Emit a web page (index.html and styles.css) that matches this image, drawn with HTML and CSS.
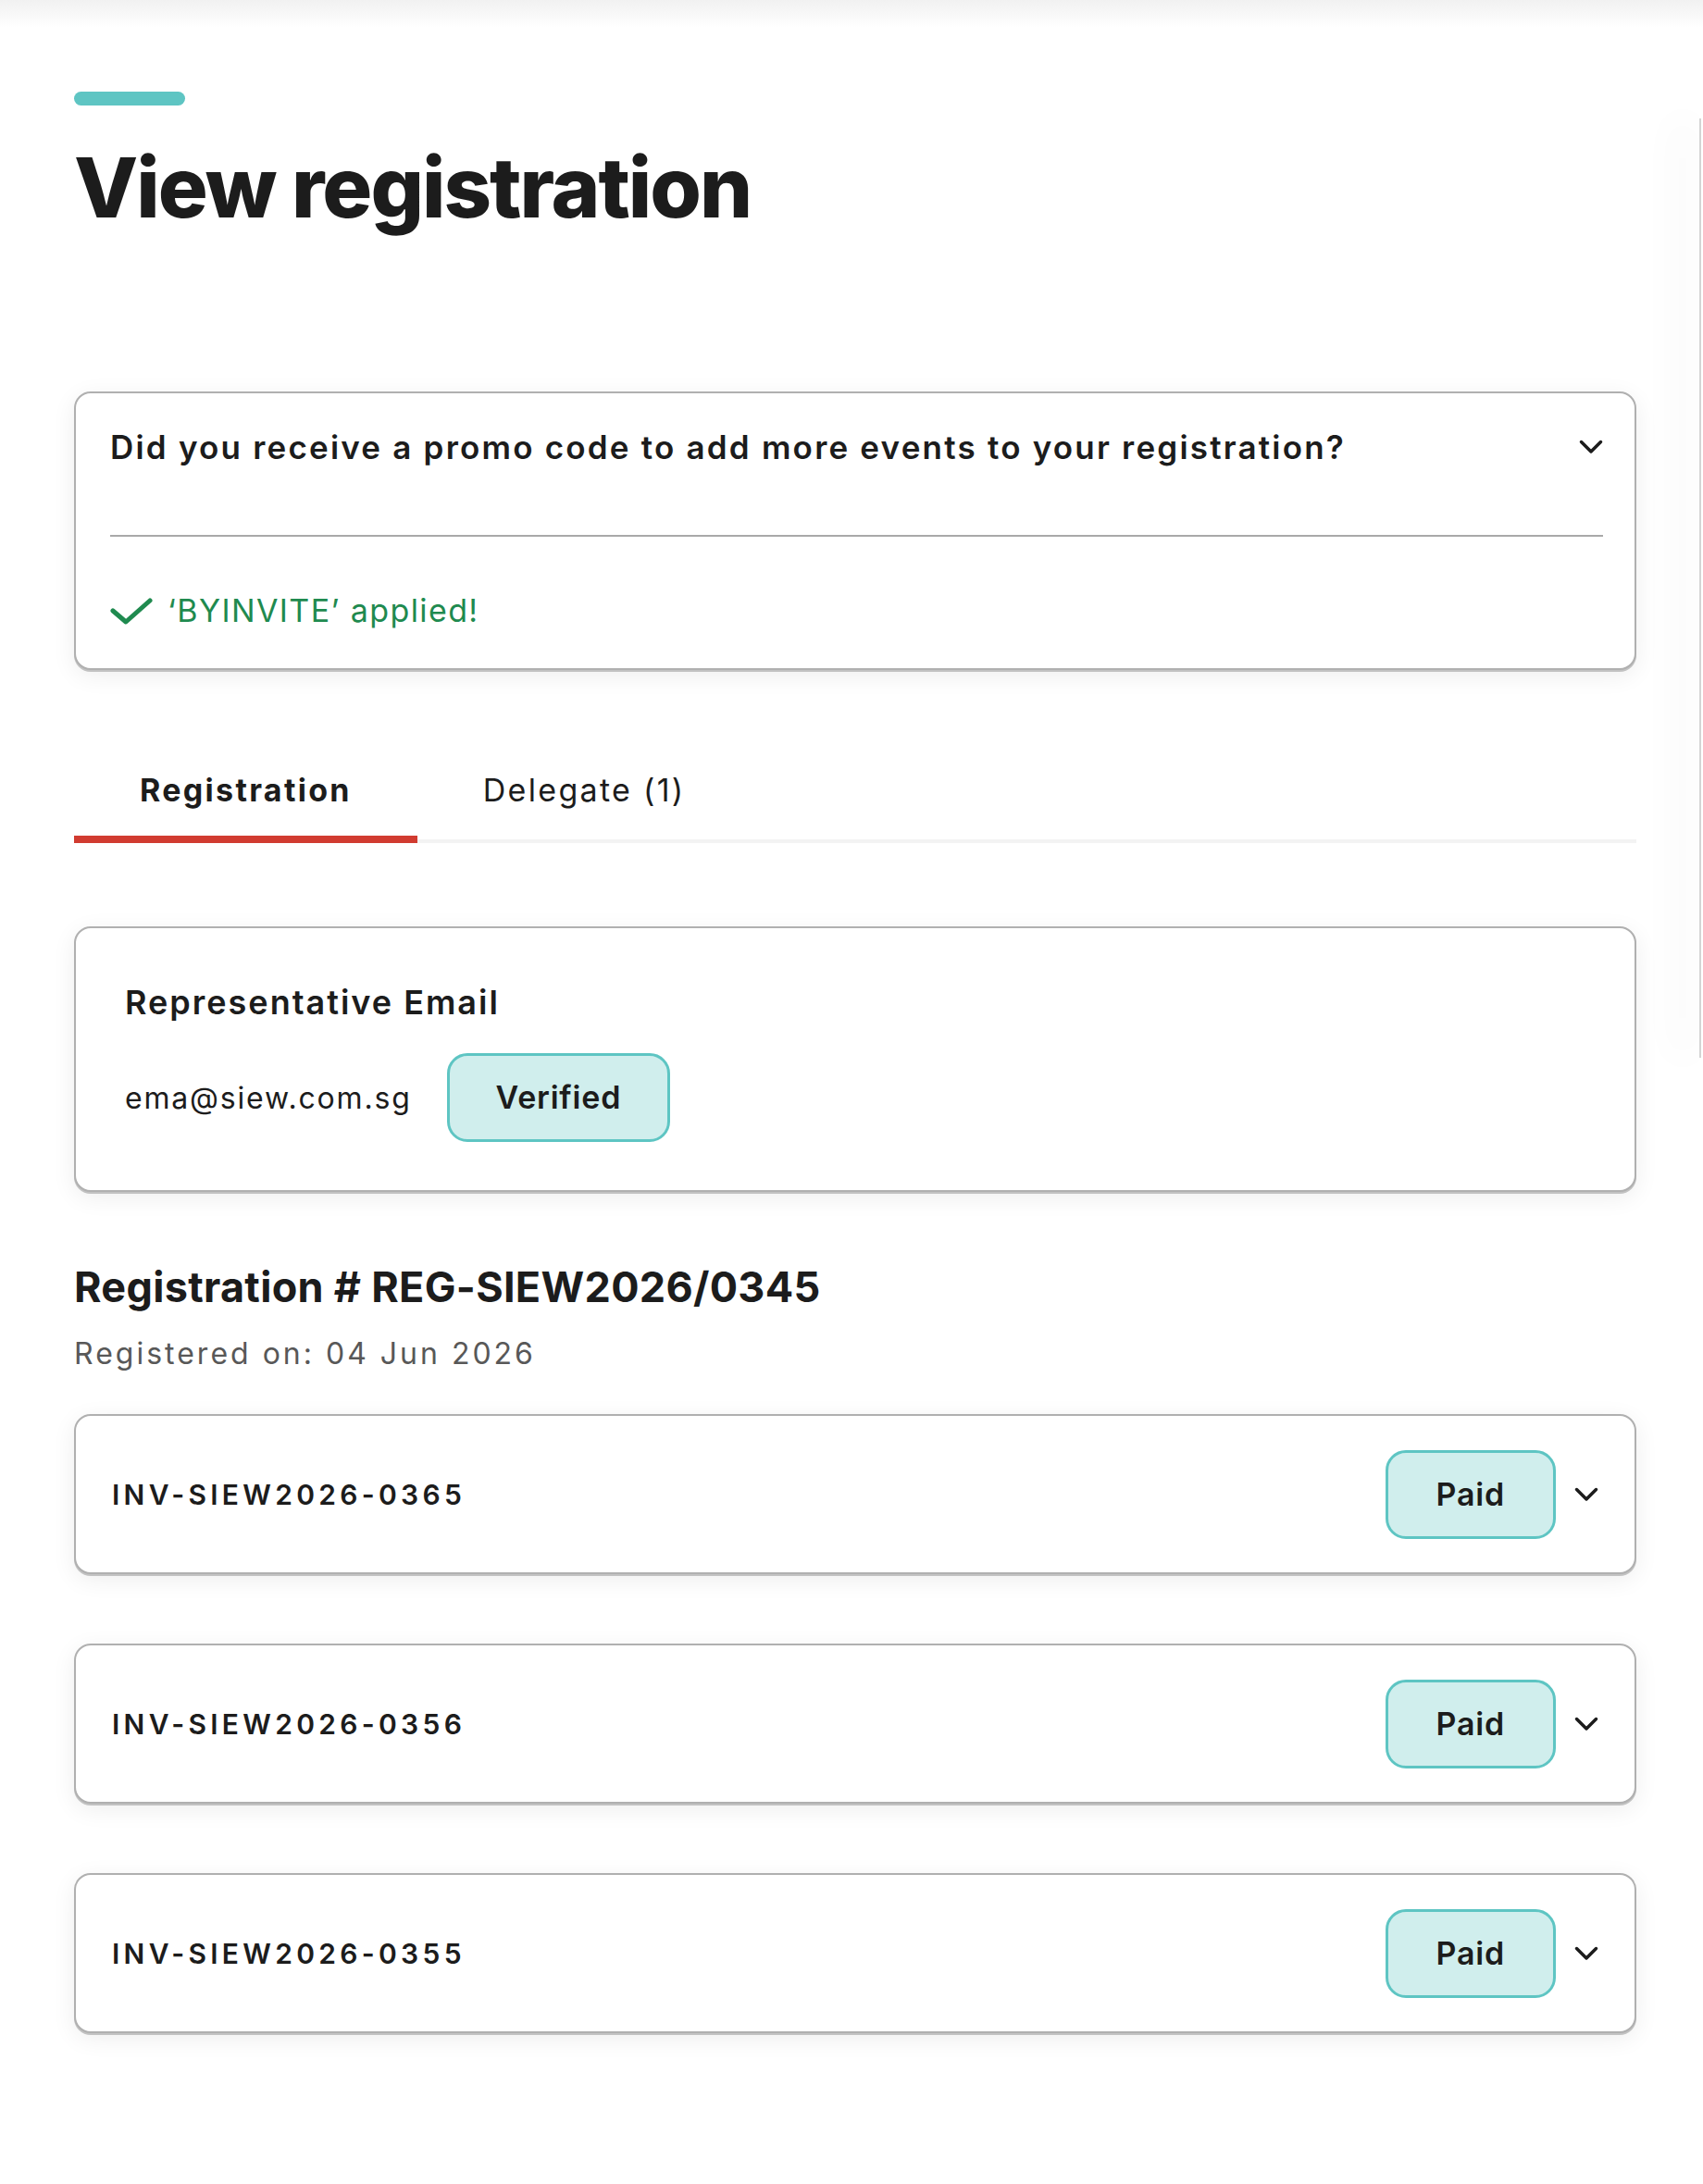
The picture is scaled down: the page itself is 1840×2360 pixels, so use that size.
FILE: index.html
```html
<!DOCTYPE html>
<html lang="en">
<head>
    <meta charset="UTF-8">
    <meta name="viewport" content="width=device-width, initial-scale=1.0">
    <title>View registration</title>
    <link rel="stylesheet" href="styles.css">
</head>
<body>
    <div class="side-panel"></div>
    <main class="page">
        <div class="accent-bar"></div>
        <h1 class="page-title">View registration</h1>

        <section class="card promo">
            <div class="promo-head">
                <span class="promo-question">Did you receive a promo code to add more events to your registration?</span>
                <svg class="chevron" viewBox="0 0 26 16" width="26" height="16"><path d="M2.5 2.5 L13 13 L23.5 2.5" /></svg>
            </div>
            <div class="promo-body">
                <svg class="check" viewBox="0 0 46 30" width="46" height="30"><path d="M3 15 L17 27 L43 4" /></svg>
                <span class="promo-applied">‘BYINVITE’ applied!</span>
            </div>
        </section>

        <nav class="tabs">
            <button class="tab active">Registration</button>
            <button class="tab">Delegate (1)</button>
        </nav>

        <section class="card rep-card">
            <h3 class="rep-label">Representative Email</h3>
            <div class="rep-row">
                <span class="rep-email">ema@siew.com.sg</span>
                <span class="badge">Verified</span>
            </div>
        </section>

        <h2 class="reg-number">Registration # REG-SIEW2026/0345</h2>
        <p class="reg-date">Registered on: 04 Jun 2026</p>

        <div class="invoice-list">
            <div class="card invoice">
                <span class="invoice-no">INV-SIEW2026-0365</span>
                <span class="badge">Paid</span>
                <svg class="chevron" viewBox="0 0 26 16" width="26" height="16"><path d="M2.5 2.5 L13 13 L23.5 2.5" /></svg>
            </div>
            <div class="card invoice">
                <span class="invoice-no">INV-SIEW2026-0356</span>
                <span class="badge">Paid</span>
                <svg class="chevron" viewBox="0 0 26 16" width="26" height="16"><path d="M2.5 2.5 L13 13 L23.5 2.5" /></svg>
            </div>
            <div class="card invoice">
                <span class="invoice-no">INV-SIEW2026-0355</span>
                <span class="badge">Paid</span>
                <svg class="chevron" viewBox="0 0 26 16" width="26" height="16"><path d="M2.5 2.5 L13 13 L23.5 2.5" /></svg>
            </div>
        </div>
    </main>
</body>
</html>
```

FILE: styles.css
```css
body {
    margin: 0;
    font-family: Inter, "Noto Sans", sans-serif;
    color: #1c1c1c;
    background: #fff;
    background-image: linear-gradient(#f1f1f1, #fff 30px);
    background-repeat: no-repeat;
    min-height: 2360px;
}

/* edge of the next panel peeking in on the right */
.side-panel {
    position: absolute;
    top: 128px;
    left: 1836px;
    width: 10px;
    height: 1015px;
    border-left: 2px solid #d4d4d4;
    box-shadow: -24px 0 40px rgba(0, 0, 0, 0.05);
}

.page {
    width: 1688px;
    padding: 99px 0 0 80px;
}

.accent-bar {
    width: 120px;
    height: 15px;
    border-radius: 8px;
    background-color: #5ec5c3;
}

.page-title {
    margin: 44px 0 0;
    font-size: 90px;
    line-height: 90px;
    font-weight: 800;
    letter-spacing: -2px;
}

.card {
    background: #fff;
    border: 2px solid #b0b0b0;
    border-radius: 18px;
    box-shadow: 0 2px 0 #c2c2c2, 0 6px 26px rgba(0, 0, 0, 0.07);
}

.promo {
    margin-top: 175px;
    padding: 36px 34px 40px 37px;
}

.promo-head {
    display: flex;
    align-items: center;
    justify-content: space-between;
    padding-bottom: 73px;
    border-bottom: 2px solid #a9a9a9;
}

.promo-question {
    font-size: 35px;
    line-height: 44px;
    font-weight: 600;
    letter-spacing: 2.2px;
}

.chevron {
    flex-shrink: 0;
    fill: none;
    stroke: #1c1c1c;
    stroke-width: 3.5;
    stroke-linecap: round;
    stroke-linejoin: round;
}

.promo-body {
    display: flex;
    align-items: center;
    gap: 16px;
    margin-top: 58px;
}

.check {
    fill: none;
    stroke: #1f8a4f;
    stroke-width: 5;
    stroke-linecap: round;
    stroke-linejoin: round;
}

.promo-applied {
    font-size: 34px;
    line-height: 44px;
    color: #1f8a4f;
    letter-spacing: 1.4px;
}

.tabs {
    display: flex;
    margin-top: 108px;
    box-shadow: inset 0 -4px 0 #f3f3f3;
}

.tab {
    padding: 0 71px 27px;
    border: none;
    border-bottom: 8px solid transparent;
    background: none;
    font-family: inherit;
    font-size: 34px;
    line-height: 44px;
    color: #1c1c1c;
    letter-spacing: 2.3px;
    cursor: pointer;
}

.tab.active {
    font-weight: 700;
    border-bottom-color: #d13b30;
}

.rep-card {
    margin-top: 90px;
    padding: 58px 53px 52px;
}

.rep-label {
    margin: 0;
    font-size: 36px;
    line-height: 44px;
    font-weight: 600;
    letter-spacing: 2px;
}

.rep-row {
    display: flex;
    align-items: center;
    gap: 38px;
    margin-top: 33px;
}

.rep-email {
    font-size: 32px;
    letter-spacing: 1.8px;
}

.badge {
    padding: 23px 50px;
    border: 3px solid #5ec5c3;
    border-radius: 22px;
    background-color: #d0eeed;
    font-size: 34px;
    line-height: 44px;
    font-weight: 600;
    letter-spacing: 0.8px;
}

.reg-number {
    margin: 75px 0 0;
    font-size: 45px;
    line-height: 56px;
    font-weight: 700;
    letter-spacing: 0.3px;
}

.reg-date {
    margin: 22px 0 0;
    font-size: 32px;
    line-height: 44px;
    color: #585858;
    letter-spacing: 3px;
}

.invoice-list {
    display: flex;
    flex-direction: column;
    gap: 75px;
    margin-top: 43px;
}

.invoice {
    display: flex;
    align-items: center;
    gap: 20px;
    padding: 37px 39px 36px 39px;
}

.invoice-no {
    flex-grow: 1;
    font-size: 30px;
    line-height: 44px;
    font-weight: 600;
    letter-spacing: 4.3px;
}

.invoice .badge {
    padding: 23px 52px;
}
```
